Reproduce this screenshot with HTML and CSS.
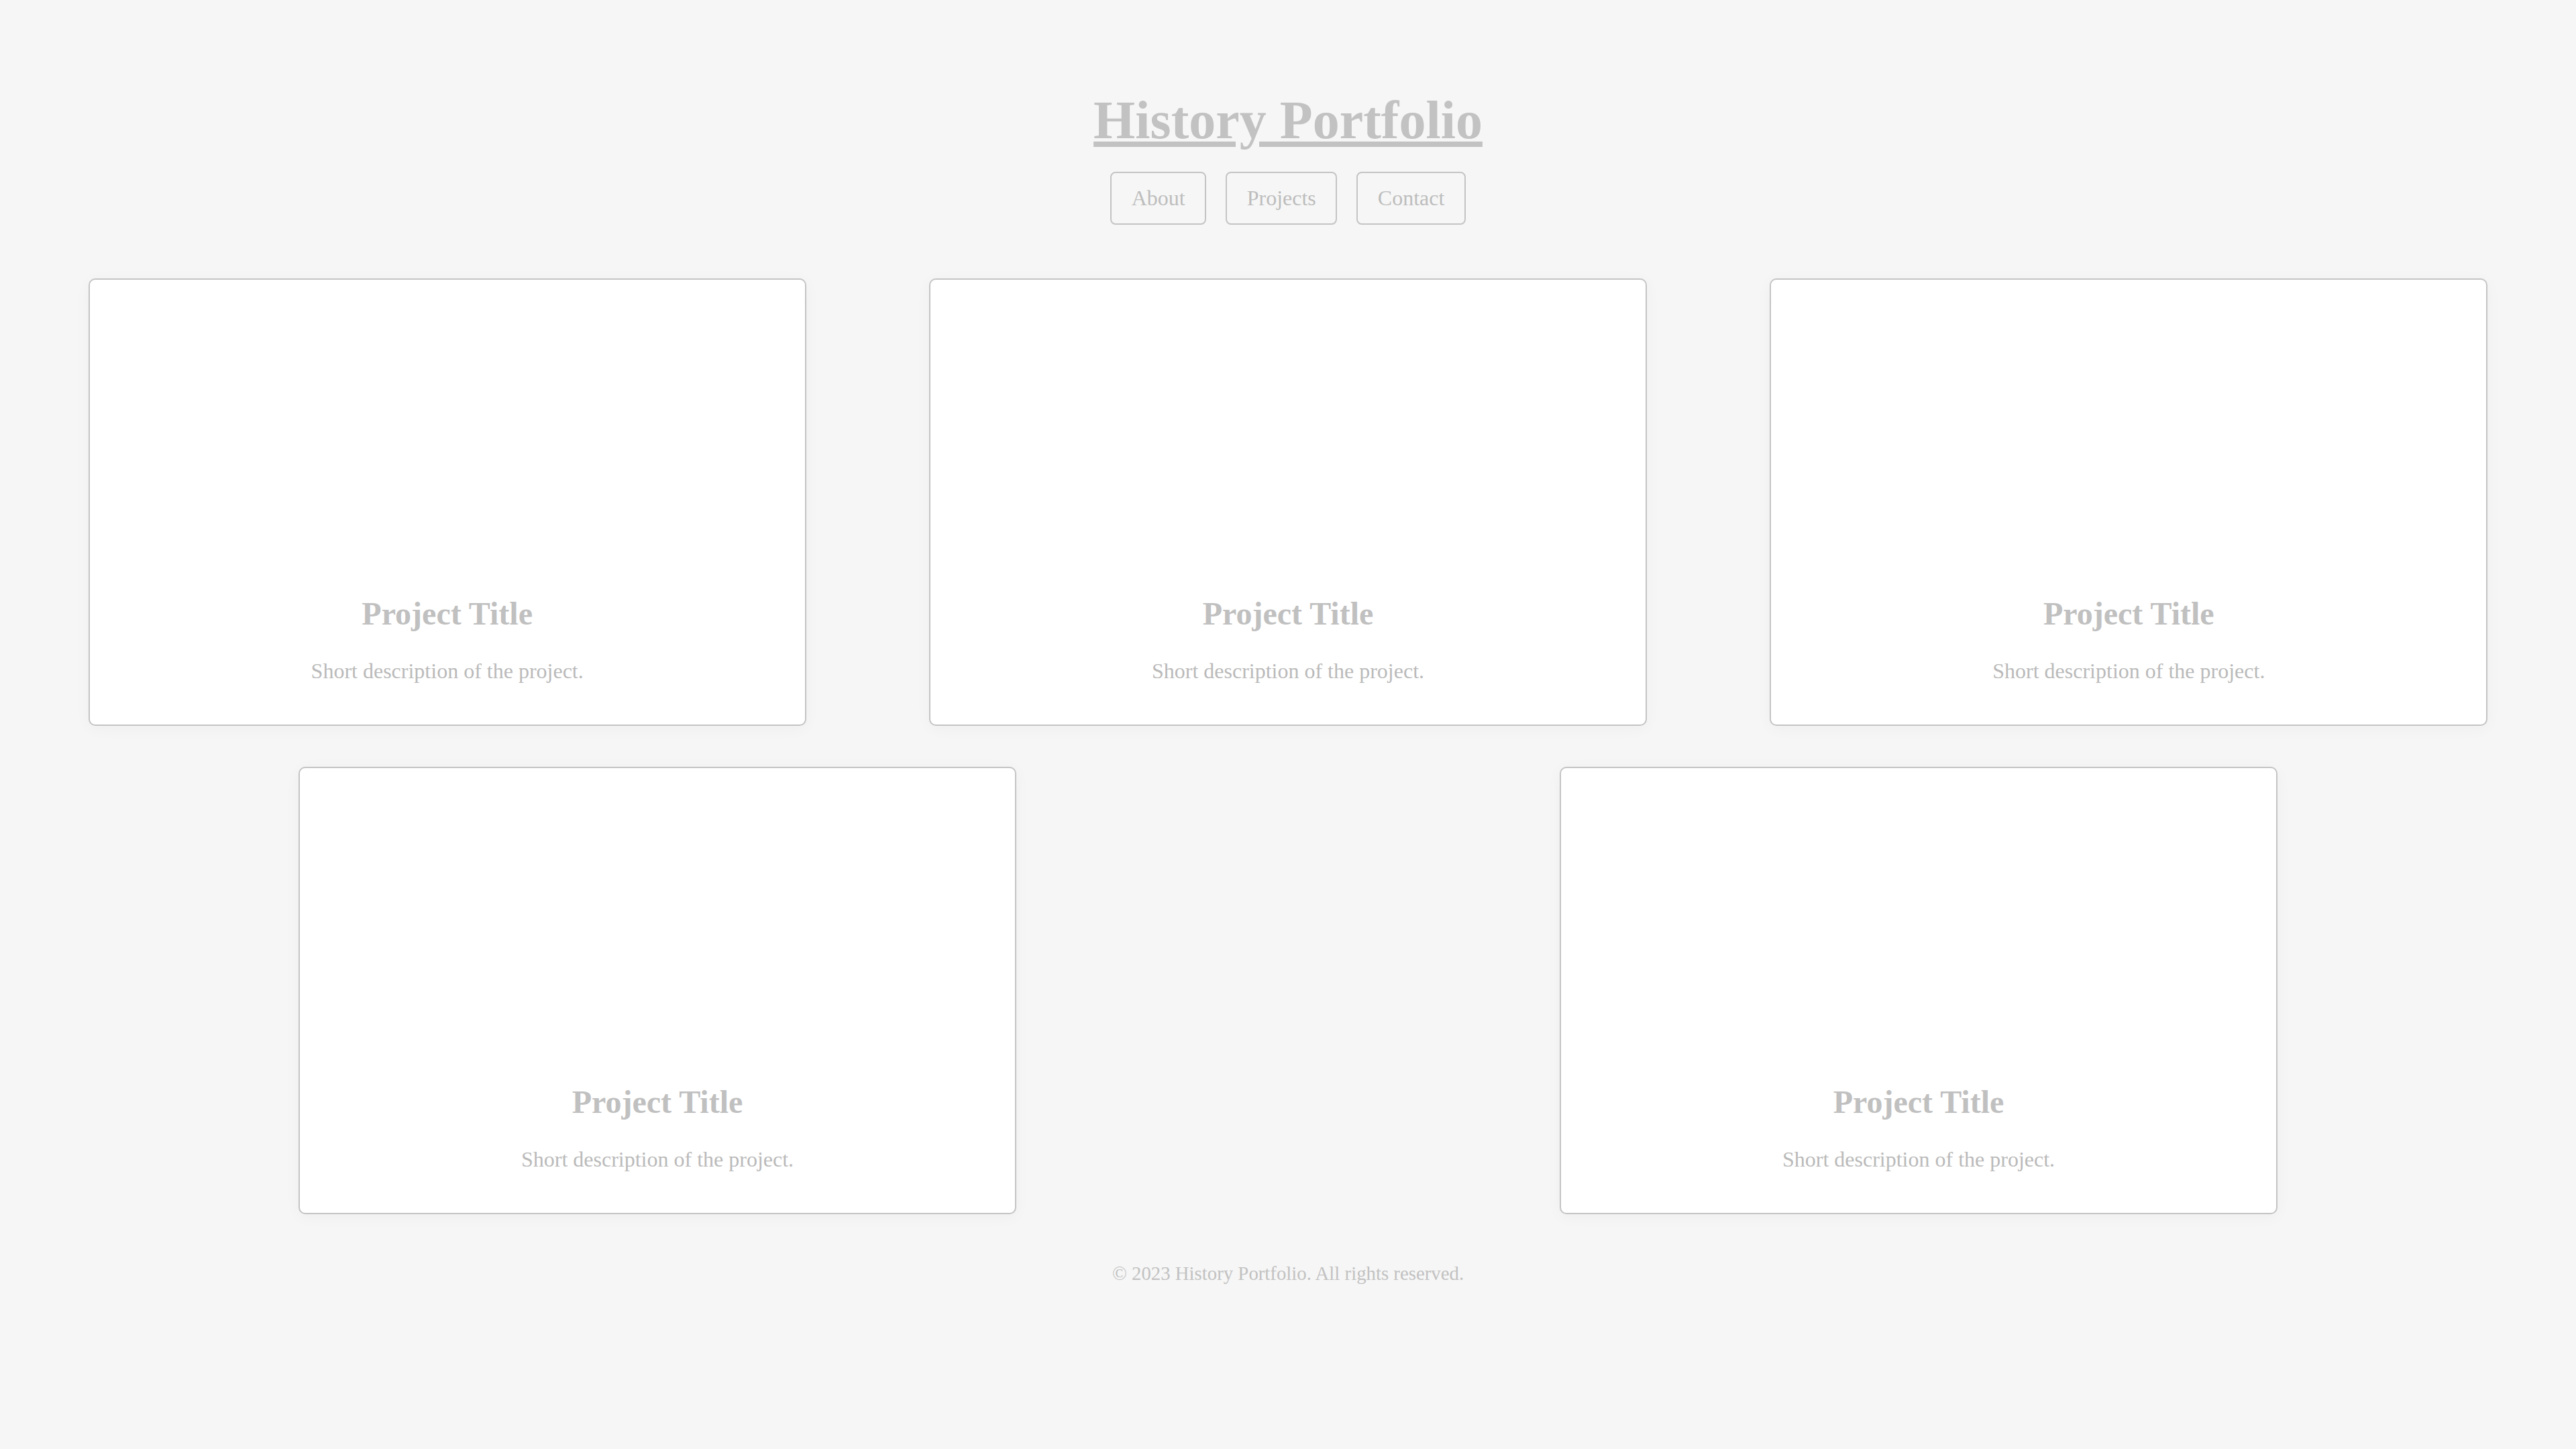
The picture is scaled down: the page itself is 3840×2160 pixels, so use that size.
FILE: index.html
```html
<!DOCTYPE html>
<html lang="en">
<head>
<meta charset="utf-8">
<title>History Portfolio</title>
<link rel="stylesheet" href="styles.css">
</head>
<body>
<header class="site-header">
  <h1 class="site-title">History Portfolio</h1>
  <nav class="site-nav">
    <a class="nav-btn" href="#about">About</a>
    <a class="nav-btn" href="#projects">Projects</a>
    <a class="nav-btn" href="#contact">Contact</a>
  </nav>
</header>
<main class="projects">
  <article class="card">
    <div class="card-thumb"></div>
    <h3 class="card-title">Project Title</h3>
    <p class="card-desc">Short description of the project.</p>
  </article>
  <article class="card">
    <div class="card-thumb"></div>
    <h3 class="card-title">Project Title</h3>
    <p class="card-desc">Short description of the project.</p>
  </article>
  <article class="card">
    <div class="card-thumb"></div>
    <h3 class="card-title">Project Title</h3>
    <p class="card-desc">Short description of the project.</p>
  </article>
  <article class="card">
    <div class="card-thumb"></div>
    <h3 class="card-title">Project Title</h3>
    <p class="card-desc">Short description of the project.</p>
  </article>
  <article class="card">
    <div class="card-thumb"></div>
    <h3 class="card-title">Project Title</h3>
    <p class="card-desc">Short description of the project.</p>
  </article>
</main>
<footer class="site-footer">
  <p class="footer-text">© 2023 History Portfolio. All rights reserved.</p>
</footer>
</body>
</html>
```

FILE: styles.css
```css
html, body {
  margin: 0;
  padding: 0;
}

body {
  background: #f6f6f6;
  font-family: "Liberation Serif", "Times New Roman", serif;
  color: #bfbfbf;
}

.site-header {
  padding-top: 134px;
  display: flex;
  flex-direction: column;
  align-items: center;
}

.site-title {
  margin: 0;
  font-size: 80px;
  font-weight: bold;
  line-height: normal;
  color: #c2c2c2;
  text-decoration: underline;
  text-decoration-color: #c2c2c2;
  text-decoration-thickness: 8px;
  text-underline-offset: 5px;
}

.site-nav {
  margin-top: 31px;
  display: flex;
  justify-content: center;
  gap: 29px;
}

.nav-btn {
  display: block;
  font-size: 32px;
  line-height: normal;
  padding: 19px 29.5px;
  border: 2px solid #c4c4c4;
  border-radius: 8px;
  color: #bdbdbd;
  text-decoration: none;
  background: transparent;
}

.projects {
  margin-top: 80px;
  padding: 0 40px;
  display: flex;
  flex-wrap: wrap;
  justify-content: space-around;
  row-gap: 61px;
}

.card {
  box-sizing: border-box;
  width: 1070px;
  background: #ffffff;
  border: 2px solid #c4c4c4;
  border-radius: 10px;
  box-shadow: 0 4px 24px rgba(0, 0, 0, 0.035);
  padding: 32px;
  text-align: center;
}

.card-thumb {
  height: 400px;
}

.card-title {
  margin: 38px 0 40px;
  font-size: 48px;
  font-weight: bold;
  line-height: normal;
  color: #c0c0c0;
}

.card-desc {
  margin: 0 0 29px;
  font-size: 32px;
  line-height: normal;
  color: #bababa;
}

.site-footer {
  margin-top: 72px;
  text-align: center;
}

.footer-text {
  margin: 0;
  font-size: 28.8px;
  line-height: normal;
  color: #c2c2c2;
}
```
